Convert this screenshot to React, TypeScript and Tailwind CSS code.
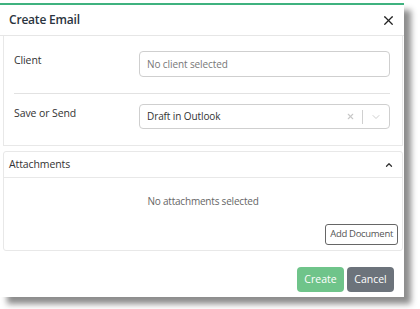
import { X, ChevronDown, ChevronUp } from "lucide-react";

const font = { fontFamily: '"Open Sans", "Noto Sans", sans-serif' };

function Field({ label, children }: { label: string; children: React.ReactNode }) {
  return (
    <div className="flex items-start">
      <div className="w-[125px] pt-[2px] text-[10.5px] tracking-[-0.1px] text-[#333]">{label}</div>
      <div className="flex-1">{children}</div>
    </div>
  );
}

export default function App() {
  return (
    <div className="h-[309px] w-[420px] bg-white pt-[3px]" style={font}>
      <div className="flex h-[294px] w-[404px] flex-col border-t-2 border-[#3fb27f] bg-white shadow-[7px_7px_6px_rgba(0,0,0,0.45)]">
        <div className="flex h-[31px] items-center justify-between border-b border-[#e6e6e6] pl-[9px] pr-[8px]">
          <span className="text-[12px] font-semibold tracking-[-0.2px] text-[#2b3440]">Create Email</span>
          <X size={15} strokeWidth={2} className="text-[#222]" />
        </div>

        <div className="ml-[3px] mr-[1px] border-x border-b border-[#e8e8e8] pb-[16px] pl-[10px] pr-[12px] pt-[15px]">
          <Field label="Client">
            <div className="flex h-[26px] items-center rounded-[4px] border border-[#cfcfcf] px-[7px] text-[10px] tracking-[-0.1px] text-[#777]">
              No client selected
            </div>
          </Field>
          <div className="mb-[10px] mt-[16px] border-t border-[#e2e2e2]" />
          <Field label="Save or Send">
            <div className="flex h-[25px] items-center rounded-[4px] border border-[#cfcfcf] pl-[7px] text-[10px] tracking-[-0.1px] text-[#333]">
              <span className="flex-1">Draft in Outlook</span>
              <X size={9} strokeWidth={3} className="mr-[7px] text-[#c8c8c8]" />
              <div className="h-[14px] w-px bg-[#d0d0d0]" />
              <ChevronDown size={12} strokeWidth={1.5} className="mx-[7px] text-[#bdbdbd]" />
            </div>
          </Field>
        </div>

        <div className="ml-[3px] mr-[1px] mt-[5px] rounded-[3px] border border-[#e8e8e8]">
          <div className="flex h-[26px] items-center justify-between border-b border-[#e8e8e8] pl-[5px] pr-[8px]">
            <span className="text-[10.5px] tracking-[-0.1px] text-[#333]">Attachments</span>
            <ChevronUp size={10} strokeWidth={3} className="text-[#333]" />
          </div>
          <div className="flex flex-col pb-[5px] pt-[16px]">
            <div className="text-center text-[10px] tracking-[-0.2px] text-[#666]">No attachments selected</div>
            <div className="mt-[15px] flex justify-end pr-[4px]">
              <button className="h-[21px] rounded-[3px] border border-[#666] px-[4px] text-[9.5px] tracking-[-0.3px] text-[#555]">
                Add Document
              </button>
            </div>
          </div>
        </div>

        <div className="mt-auto flex justify-end gap-[3px] pb-[5px] pr-[10px]">
          <button className="h-[25px] w-[47px] rounded-[4px] bg-[#6fc48a] text-[10.5px] text-white">Create</button>
          <button className="h-[25px] w-[47px] rounded-[4px] bg-[#6c737b] text-[10.5px] text-white">Cancel</button>
        </div>
      </div>
    </div>
  );
}
